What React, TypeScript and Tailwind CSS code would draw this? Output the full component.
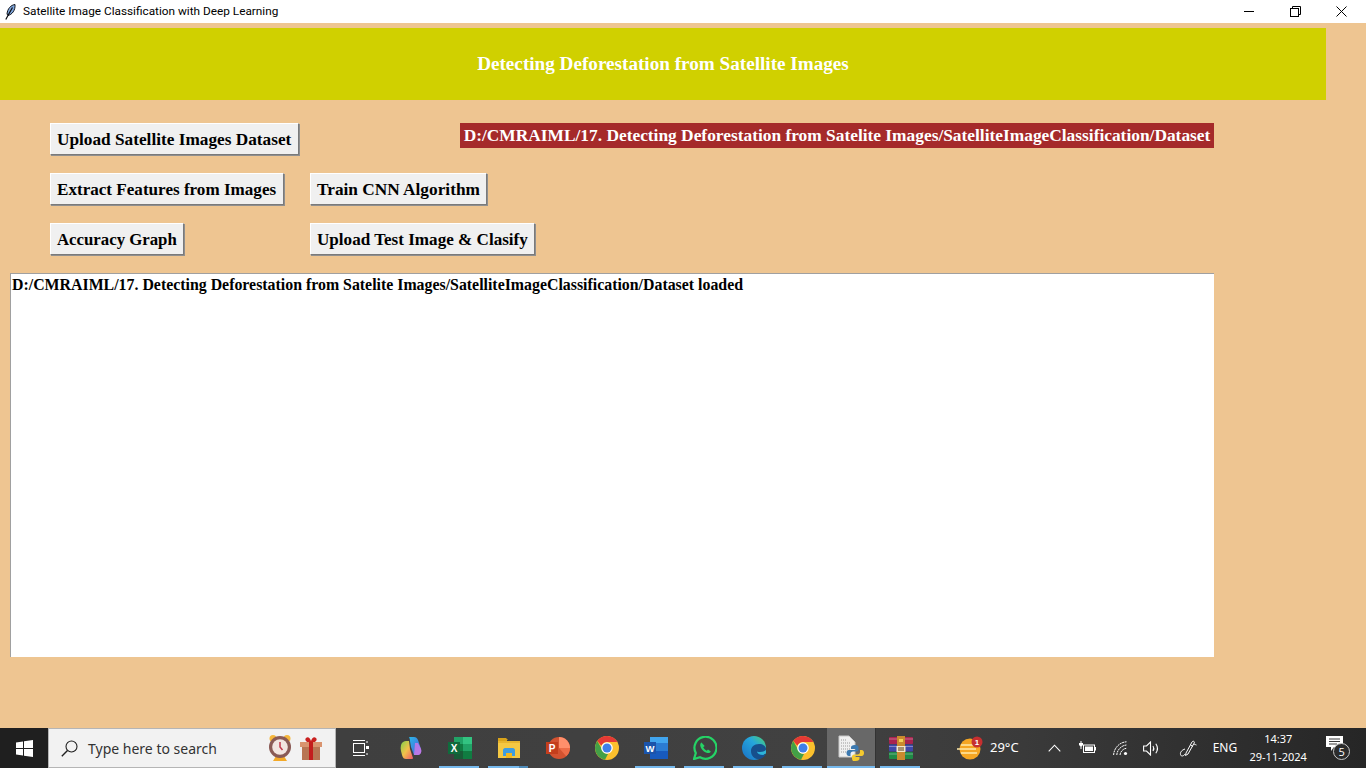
const serif = "font-['Liberation_Serif','Times_New_Roman',serif] font-bold";

function TkButton({ label, className }: { label: string; className: string }) {
  return (
    <button
      className={`${serif} h-[32px] shrink-0 bg-[#f0f0f0] border border-t-white border-l-white border-r-[#7a7a7a] border-b-[#7a7a7a] shadow-[1px_1px_0_#8f8f8f] text-left pl-[6px] leading-[31px] text-black whitespace-nowrap ${className}`}
    >
      {label}
    </button>
  );
}

function Feather() {
  return (
    <svg width="11" height="16" viewBox="0 0 11 16">
      <path d="M10 .5C6 1 2.500 4.500 2 10l1 1.500C7 10.500 10.500 6.500 10 .5z" fill="#7fa6dc" stroke="#10131c" strokeWidth="1" />
      <path d="M7.500 3.500 3.500 10.500 .8 15.500" fill="none" stroke="#0b0b10" strokeWidth="1.200" />
    </svg>
  );
}

function SearchGlass() {
  return (
    <svg width="17" height="17" viewBox="0 0 17 17" fill="none" stroke="#1f1f1f" strokeWidth="1.100">
      <circle cx="10.500" cy="6.500" r="5.500" />
      <path d="M6.500 10.500 .8 16.200" strokeWidth="1.400" />
    </svg>
  );
}

function AlarmClock() {
  return (
    <svg width="24" height="28" viewBox="0 0 24 28">
      <circle cx="5" cy="4.500" r="3.500" fill="#f6b73c" />
      <circle cx="19" cy="4.500" r="3.500" fill="#f6b73c" />
      <path d="M5 27h14l-3-5H8z" fill="#f3a928" />
      <circle cx="12" cy="13" r="11" fill="#8a5a55" />
      <circle cx="12" cy="13" r="7.800" fill="#f2e5e0" />
      <path d="M12 8v5l2.500 3" fill="none" stroke="#c2394b" strokeWidth="1.500" />
    </svg>
  );
}

function Gift() {
  return (
    <svg width="24" height="26" viewBox="0 0 24 26">
      <path d="M7 3c2-2 4 0 5 3 1-3 3-5 5-3 2 2-1 5-5 5S5 5 7 3z" fill="#c9201f" />
      <path d="M1 7h22v5H1z" fill="#d9946f" />
      <path d="M3 12h18v13H3z" fill="#b87553" />
      <path d="M10 7h4v18h-4z" fill="#c31d1d" />
    </svg>
  );
}

function TaskView() {
  return (
    <svg width="16" height="16" viewBox="0 0 16 16" fill="none" stroke="#fff" strokeWidth="1">
      <path d="M0 .5h12M0 15.500h12" />
      <rect x=".5" y="3.500" width="11" height="9" />
      <path d="M14 1v2M14 13v2" />
      <rect x="13" y="6" width="3" height="3" fill="#fff" stroke="none" />
    </svg>
  );
}

function Copilot() {
  return (
    <svg width="24" height="24" viewBox="0 0 24 24">
      <defs>
        <linearGradient id="cpa" x1="0" y1="0" x2="1" y2="1">
          <stop offset="0" stopColor="#2bb8e8" />
          <stop offset=".6" stopColor="#3f7fe0" />
          <stop offset="1" stopColor="#b06be0" />
        </linearGradient>
        <linearGradient id="cpb" x1="0" y1="0" x2="1" y2="1">
          <stop offset="0" stopColor="#7fd14a" />
          <stop offset=".5" stopColor="#f2c14a" />
          <stop offset="1" stopColor="#f0566a" />
        </linearGradient>
      </defs>
      <path d="M10 1h5c2 0 3 1 4 3l3 9c1 4-1 6-4 6h-3l-3-8-1-6c0-2-1-4-1-4z" fill="url(#cpa)" />
      <path d="M2 9c1-3 3-4 5-4h3l1 8 3 9c0 1-1 1-2 1H7c-2 0-3-1-4-4l-1-4c-.500-2-.500-4 0-6z" fill="url(#cpb)" />
      <path d="M16 7h3l3 6c1 4-1 6-4 6h-3z" fill="#c779e6" opacity=".85" />
    </svg>
  );
}

function Excel() {
  return (
    <svg width="24" height="22" viewBox="0 0 24 22">
      <path d="M6 0h18v7H6z" fill="#21a366" />
      <path d="M6 7h18v7H6z" fill="#107c41" />
      <path d="M6 14h18v8H6z" fill="#185c37" />
      <path d="M15 0h9v7h-9z" fill="#33c481" />
      <path d="M15 7h9v7h-9z" fill="#21a366" />
      <path d="M15 14h9v8h-9z" fill="#107c41" />
      <rect y="5" width="12" height="12" fill="#0f6b3c" />
      <text x="6" y="15" textAnchor="middle" fontSize="10" fontWeight="700" fill="#fff" fontFamily="Liberation Sans">X</text>
    </svg>
  );
}

function Explorer() {
  return (
    <svg width="22" height="20" viewBox="0 0 22 20">
      <path d="M0 0h8l2 2h-1v3H0z" fill="#d9a31a" />
      <path d="M0 3h22v17H0z" fill="#f5c843" />
      <path d="M0 3h22v2H0z" fill="#e8b52e" />
      <path d="M5 18v-6c0-1 1-2 2-2h8c1 0 2 1 2 2v6h-3v-3H8v3z" fill="#3f9de0" />
      <path d="M8 15h6v5H8z" fill="#f2b81f" />
    </svg>
  );
}

function PowerPoint() {
  return (
    <svg width="24" height="24" viewBox="0 0 24 24">
      <circle cx="13" cy="12" r="11" fill="#d35230" />
      <path d="M13 1a11 11 0 0 1 11 11H13z" fill="#ff8f6b" />
      <path d="M13 12h11a11 11 0 0 1-3.800 8.300z" fill="#ed6c47" />
      <rect y="6" width="12" height="12" fill="#c43e1c" />
      <text x="6" y="16" textAnchor="middle" fontSize="10" fontWeight="700" fill="#fff" fontFamily="Liberation Sans">P</text>
    </svg>
  );
}

function Chrome() {
  return (
    <svg width="24" height="24" viewBox="0 0 24 24">
      <circle cx="12" cy="12" r="12" fill="#fbc02d" />
      <path d="M12 0a12 12 0 0 1 10.400 6H12a6 6 0 0 0-5.600 3.800L2.300 5A12 12 0 0 1 12 0z" fill="#e53935" />
      <path d="M2.300 5l4.900 8.800A6 6 0 0 0 13 18l-3 5.800A12 12 0 0 1 2.300 5z" fill="#43a047" />
      <circle cx="12" cy="12" r="5.800" fill="#fff" />
      <circle cx="12" cy="12" r="4.500" fill="#3f7fe8" />
    </svg>
  );
}

function Word() {
  return (
    <svg width="24" height="22" viewBox="0 0 24 22">
      <path d="M6 0h18v6H6z" fill="#41a5ee" />
      <path d="M6 6h18v8H6z" fill="#2b7cd3" />
      <path d="M6 14h18v8H6z" fill="#185abd" />
      <rect y="5" width="12" height="12" fill="#1b54ab" />
      <text x="6" y="15" textAnchor="middle" fontSize="9.500" fontWeight="700" fill="#fff" fontFamily="Liberation Sans">W</text>
    </svg>
  );
}

function WhatsApp() {
  return (
    <svg width="24" height="24" viewBox="0 0 24 24">
      <path d="M1 23l1.800-6A11 11 0 1 1 7 21.300z" fill="none" stroke="#25d366" strokeWidth="2.200" />
      <path d="M8.500 6.500c-1 .5-1.500 2-1.200 3.500.7 3 3.500 6 7 7 1.500.3 3-.3 3.500-1.500l-2.800-2-1.300 1.200c-1.500-.7-2.800-2-3.500-3.500L11.700 10z" fill="#25d366" />
    </svg>
  );
}

function Edge() {
  return (
    <svg width="24" height="24" viewBox="0 0 24 24">
      <defs>
        <linearGradient id="edg" x1="0" y1="1" x2="1" y2="0">
          <stop offset="0" stopColor="#1a6fc4" />
          <stop offset=".6" stopColor="#25a6dd" />
          <stop offset="1" stopColor="#4fd36a" />
        </linearGradient>
      </defs>
      <circle cx="12" cy="12" r="12" fill="url(#edg)" />
      <path d="M24 13c0-3-3-5-7-5-5 0-8 3-8 7 0 5 4 9 9 8 3-1 5-3 6-5-3 2-8 1-9-2 3 1 9 1 9-3z" fill="#174f8c" />
      <path d="M24 14c-1 1-3 2-6 2-1 0-2 0-3-.5 1 3 6 4 9 2z" fill="#2fb4d8" />
    </svg>
  );
}

function PythonFile() {
  return (
    <svg width="26" height="26" viewBox="0 0 26 26">
      <path d="M1 1h10l6 6v15H1z" fill="#f0f0f0" stroke="#c8c8c8" />
      <path d="M3 5h5M3 8h9M3 11h9M3 14h9M3 17h9" stroke="#9a9a9a" strokeWidth="1" strokeDasharray="1 1" />
      <path d="M17 10c-3 0-4 1-4 2.500V14h4.500v1H11c-2 0-2.500 1.500-2.500 3s.5 3 2.500 3h1.500v-2c0-1.500 1-2.500 2.500-2.500h3.500c1.200 0 2-1 2-2v-2C20.500 11 19.500 10 17 10z" fill="#3c79b0" />
      <path d="M17.500 26c3 0 4-1 4-2.500V22H17v-1h6.500c2 0 2.500-1.500 2.500-3s-.5-3-2.500-3H22v2c0 1.500-1 2.500-2.500 2.500H16c-1.200 0-2 1-2 2v2c0 1.500 1 3.500 3.500 3.500z" fill="#f4c92e" />
    </svg>
  );
}

function WinRar() {
  return (
    <svg width="24" height="24" viewBox="0 0 24 24">
      <rect y="1" width="24" height="7" rx="1" fill="#a8234f" />
      <rect y="8.500" width="24" height="7" rx="1" fill="#3f47a8" />
      <rect y="16" width="24" height="7" rx="1" fill="#1f8a45" />
      <path d="M0 3h24M0 10.500h24M0 18h24" stroke="#ffffff" strokeOpacity=".35" strokeWidth="1" />
      <rect x="8" y="0" width="8" height="24" fill="#c98a2e" />
      <rect x="7.500" y="10" width="9" height="6" fill="#f2e7c9" />
      <path d="M10 11v4M12 11v4M14 11v4" stroke="#5a3a12" strokeWidth="1" />
      <rect x="10" y="3" width="4" height="3" fill="#f3cf58" />
    </svg>
  );
}

function Weather() {
  return (
    <svg width="26" height="24" viewBox="0 0 26 24">
      <circle cx="13" cy="13" r="10.500" fill="#f5a623" />
      <path d="M4 9h16M0 13h19M4 17h16" stroke="#ffe9a8" strokeWidth="1.500" />
      <circle cx="20" cy="6" r="5.500" fill="#c62f2f" />
      <text x="20" y="9" textAnchor="middle" fontSize="8" fontWeight="700" fill="#fff" fontFamily="Liberation Sans">1</text>
    </svg>
  );
}

function Caret() {
  return (
    <svg width="13" height="8" viewBox="0 0 13 8" fill="none" stroke="#fff" strokeWidth="1.100">
      <path d="M.7 7.300 6.500 1.200l5.800 6.100" />
    </svg>
  );
}

function Battery() {
  return (
    <svg width="17" height="14" viewBox="0 0 17 14" fill="#fff">
      <path d="M1 0v2H0v2l1.500 1.500V8h1V5.500L4 4V2H3V0H2.500v2h-1V0z" />
      <rect x="4.500" y="4" width="11" height="7.500" fill="none" stroke="#fff" />
      <rect x="6" y="5.500" width="8" height="4.500" />
      <rect x="16" y="6" width="1" height="3.500" />
    </svg>
  );
}

function WifiFan() {
  return (
    <svg width="15" height="15" viewBox="0 0 15 15" fill="none" stroke="#fff" strokeWidth="1">
      <path d="M.6 14C1 7 6.500 1.200 13.500.8M3.800 14C4 9 8.500 4.300 13.500 4M7 14c.2-3 3-6.500 6.500-6.700" strokeDasharray="2 .6" />
      <circle cx="12.500" cy="12.500" r="1.600" fill="#fff" stroke="none" />
    </svg>
  );
}

function Speaker() {
  return (
    <svg width="17" height="15" viewBox="0 0 17 15" fill="none" stroke="#fff" strokeWidth="1.100">
      <path d="M.6 5h2.900l4-4v13l-4-4H.6z" />
      <path d="M10 5c1 1.500 1 3.500 0 5M12.800 2.800c2 2.800 2 6.600 0 9.400" />
    </svg>
  );
}

function Pen() {
  return (
    <svg width="18" height="18" viewBox="0 0 18 18" fill="none" stroke="#fff" strokeWidth="1">
      <path d="M7 14 13 3c1-1.500 3-.5 2.200 1L9 15l-2.500 1.500z" />
      <path d="M11.500 6 14 7.500M15 5c1 .5 2.500 1 2.500 1" />
      <path d="M6 10c-3 1-5 3-4.500 5.500S5 17 6 15" />
    </svg>
  );
}

function Notifications() {
  return (
    <div className="relative h-[24px] w-[24px]">
      <svg width="17" height="15" viewBox="0 0 17 15" className="absolute left-0 top-0">
        <path d="M0 0h17v11H8l-3 4v-4H0z" fill="#fff" />
        <path d="M3 3h11M3 5.500h11M3 8h8" stroke="#3a3a3a" strokeWidth="1" />
      </svg>
      <span className="absolute left-[7px] top-[7px] flex h-[17px] w-[17px] items-center justify-center rounded-full border border-[#c8c8c8] bg-[#2c2c2c] text-[11px] leading-none text-white font-['Open_Sans',sans-serif]">
        5
      </span>
    </div>
  );
}

function Slot({ children, open, stacked }: { children: React.ReactNode; open?: boolean; stacked?: boolean }) {
  return (
    <div className="relative flex h-full w-[49px] shrink-0 items-center justify-center">
      {children}
      {/* running-app underline */}
      {open && <span className="absolute bottom-0 left-[4px] right-[5px] h-[2px] bg-[#76b9ed]" />}
      {stacked && <span className="absolute bottom-0 left-[35px] right-[5px] h-[2px] bg-[#4d8ab8]" />}
    </div>
  );
}

export default function App() {
  return (
    <div className="flex h-[768px] w-[1366px] flex-col overflow-hidden bg-[#eec591]">
      {/* title bar */}
      <div className="flex h-[23px] shrink-0 items-center bg-white">
        <div className="flex w-[23px] pl-[5px]">
          <Feather />
        </div>
        <span className="text-[11.800px] text-black font-['Roboto','Noto_Sans',sans-serif]">
          Satellite Image Classification with Deep Learning
        </span>
        <div className="ml-auto mr-[2px] flex h-full items-center">
          <div className="flex w-[46px] justify-center">
            <span className="h-px w-[10px] bg-black" />
          </div>
          <div className="flex w-[46px] justify-center">
            <svg width="11" height="11" viewBox="0 0 11 11" fill="none" stroke="#000">
              <rect x=".5" y="2.500" width="8" height="8" />
              <path d="M2.500 2.500v-2h8v8h-2" />
            </svg>
          </div>
          <div className="flex w-[46px] justify-center">
            <svg width="11" height="11" viewBox="0 0 11 11" fill="none" stroke="#000">
              <path d="M.5.5l10 10M10.500.5l-10 10" />
            </svg>
          </div>
        </div>
      </div>

      {/* window body */}
      <div className="flex min-h-0 flex-1 flex-col">
        <div className={`${serif} mt-[5px] flex h-[72px] w-[1326px] shrink-0 items-center justify-center bg-[#d0d000] pt-[1px] text-[19.170px] text-white`}>
          Detecting Deforestation from Satellite Images
        </div>

        <div className="mt-[23px] flex items-start pl-[50px]">
          <TkButton label="Upload Satellite Images Dataset" className="w-[249px] text-[17.250px]" />
          <div className={`${serif} ml-[161px] flex h-[25px] w-[754px] items-center justify-center bg-[#a52a2a] pt-[1px] text-[17.380px] text-white whitespace-nowrap`}>
            D:/CMRAIML/17. Detecting Deforestation from Satelite Images/SatelliteImageClassification/Dataset
          </div>
        </div>
        <div className="mt-[18px] flex pl-[50px]">
          <TkButton label="Extract Features from Images" className="w-[234px] text-[17.100px]" />
          <TkButton label="Train CNN Algorithm" className="ml-[26px] w-[177px] text-[17.300px]" />
        </div>
        <div className="mt-[18px] flex pl-[50px]">
          <TkButton label="Accuracy Graph" className="w-[134px] text-[16.800px]" />
          <TkButton label="Upload Test Image & Clasify" className="ml-[126px] w-[225px] text-[17.100px]" />
        </div>

        <div className={`${serif} ml-[10px] mt-[18px] h-[384px] w-[1204px] border-t border-l border-[#a0a0a0] bg-white pl-[1px] pt-[1px] text-[15.870px] leading-[20px] text-black`}>
          D:/CMRAIML/17. Detecting Deforestation from Satelite Images/SatelliteImageClassification/Dataset loaded
        </div>
      </div>

      {/* windows taskbar */}
      <div className="flex h-[40px] shrink-0 items-center bg-[linear-gradient(90deg,#222222_0%,#3f3f3f_25%,#414141_60%,#3a3a3a_75%,#262626_100%)] font-['Noto_Sans','Open_Sans',sans-serif] text-white">
        <div className="flex h-full w-[48px] items-center justify-center bg-[#1f1f1f]">
          <svg width="17" height="17" viewBox="0 0 17 17" fill="#fff">
            <path d="M0 2.400 7 1.400V8H0zM8 1.300 17 0v8H8zM0 9h7v6.600l-7-1zM8 9h9v8l-9-1.300z" />
          </svg>
        </div>
        <div className="flex h-full w-[288px] items-center border border-[#b5b5b5] bg-[#f2f2f2] pl-[12px] pr-[12px]">
          <SearchGlass />
          <span className="ml-[10px] text-[14px] text-[#333]">Type here to search</span>
          <div className="ml-auto flex items-center gap-[7px]">
            <AlarmClock />
            <Gift />
          </div>
        </div>

        <div className="flex h-full w-[50px] items-center justify-center">
          <TaskView />
        </div>
        <Slot><Copilot /></Slot>
        <Slot open><Excel /></Slot>
        <Slot open stacked><Explorer /></Slot>
        <Slot><PowerPoint /></Slot>
        <Slot><Chrome /></Slot>
        <Slot open><Word /></Slot>
        <Slot open><WhatsApp /></Slot>
        <Slot open><Edge /></Slot>
        <Slot open><Chrome /></Slot>
        <div className="relative flex h-full w-[49px] shrink-0 items-center justify-center border-r border-[#333] bg-[#686868]">
          <PythonFile />
          <span className="absolute bottom-0 left-0 right-0 h-[2px] bg-[#76b9ed]" />
        </div>
        <Slot open><WinRar /></Slot>

        <div className="ml-[32px] flex items-center">
          <Weather />
          <span className="ml-[7px] text-[13px]">29°C</span>
        </div>
        <div className="ml-[29px]"><Caret /></div>
        <div className="ml-[18px]"><Battery /></div>
        <div className="ml-[17px]"><WifiFan /></div>
        <div className="ml-[15px]"><Speaker /></div>
        <div className="ml-[19px]"><Pen /></div>
        <span className="ml-[16px] text-[12px]">ENG</span>
        <div className="ml-[5px] flex w-[72px] flex-col items-center text-[11px] leading-[18px]">
          <span>14:37</span>
          <span>29-11-2024</span>
        </div>
        <div className="ml-[12px]"><Notifications /></div>
      </div>
    </div>
  );
}
